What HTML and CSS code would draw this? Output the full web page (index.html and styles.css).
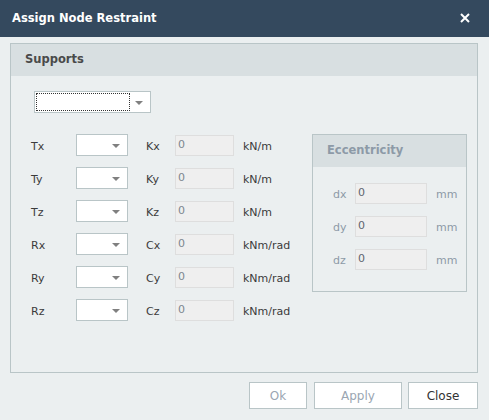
FILE: index.html
```html
<!DOCTYPE html>
<html>
<head>
  <meta charset="UTF-8">
  <title>Assign Node Restraint</title>
  <link rel="stylesheet" href="styles.css">
</head>
<body>
  <div class="dialog">
    <div class="title-bar">
      <span class="title">Assign Node Restraint</span>
      <span class="close-x">
        <svg width="10" height="10" viewBox="0 0 10 10">
          <path d="M1 1 L9 9 M9 1 L1 9" stroke="#ffffff" stroke-width="2" fill="none"/>
        </svg>
      </span>
    </div>

    <div class="content">
      <div class="panel supports">
        <div class="panel-header">Supports</div>
        <div class="panel-body">
          <div class="combo combo-main">
            <div class="focus-rect"></div>
            <span class="arrow"></span>
          </div>

          <div class="support-area">
            <div class="rows">
              <div class="row">
                <span class="lbl">Tx</span>
                <div class="combo combo-small"><span class="arrow"></span></div>
                <span class="lbl2">Kx</span>
                <div class="field">0</div>
                <span class="unit">kN/m</span>
              </div>
              <div class="row">
                <span class="lbl">Ty</span>
                <div class="combo combo-small"><span class="arrow"></span></div>
                <span class="lbl2">Ky</span>
                <div class="field">0</div>
                <span class="unit">kN/m</span>
              </div>
              <div class="row">
                <span class="lbl">Tz</span>
                <div class="combo combo-small"><span class="arrow"></span></div>
                <span class="lbl2">Kz</span>
                <div class="field">0</div>
                <span class="unit">kN/m</span>
              </div>
              <div class="row">
                <span class="lbl">Rx</span>
                <div class="combo combo-small"><span class="arrow"></span></div>
                <span class="lbl2">Cx</span>
                <div class="field">0</div>
                <span class="unit">kNm/rad</span>
              </div>
              <div class="row">
                <span class="lbl">Ry</span>
                <div class="combo combo-small"><span class="arrow"></span></div>
                <span class="lbl2">Cy</span>
                <div class="field">0</div>
                <span class="unit">kNm/rad</span>
              </div>
              <div class="row">
                <span class="lbl">Rz</span>
                <div class="combo combo-small"><span class="arrow"></span></div>
                <span class="lbl2">Cz</span>
                <div class="field">0</div>
                <span class="unit">kNm/rad</span>
              </div>
            </div>

            <div class="panel eccentricity">
              <div class="panel-header">Eccentricity</div>
              <div class="ecc-body">
                <div class="ecc-row">
                  <span class="ecc-lbl">dx</span>
                  <div class="field ecc-field">0</div>
                  <span class="ecc-unit">mm</span>
                </div>
                <div class="ecc-row">
                  <span class="ecc-lbl">dy</span>
                  <div class="field ecc-field">0</div>
                  <span class="ecc-unit">mm</span>
                </div>
                <div class="ecc-row">
                  <span class="ecc-lbl">dz</span>
                  <div class="field ecc-field">0</div>
                  <span class="ecc-unit">mm</span>
                </div>
              </div>
            </div>
          </div>
        </div>
      </div>

      <div class="buttons">
        <button class="btn btn-ok" disabled>Ok</button>
        <button class="btn btn-apply" disabled>Apply</button>
        <button class="btn btn-close">Close</button>
      </div>
    </div>
  </div>
</body>
</html>
```

FILE: styles.css
```css
body {
  margin: 0;
  font-family: 'DejaVu Sans', Verdana, sans-serif;
  font-size: 11px;
  color: #3b3b3b;
  background-color: #ebeff0;
}

.dialog {
  width: 489px;
  height: 420px;
  background-color: #ebeff0;
}

.title-bar {
  height: 37px;
  background-color: #34495e;
  display: flex;
  align-items: center;
  justify-content: space-between;
  padding: 0 20px 0 12px;
}

.title {
  color: #ffffff;
  font-weight: bold;
  font-size: 11.5px;
  margin-top: -1px;
}

.close-x {
  display: flex;
  margin-top: -1px;
  margin-right: -1px;
}

.content {
  padding: 6px 11px 0 10px;
}

/* panels */
.panel {
  border: 1px solid #b9c5c7;
  background-color: #ebeff0;
}

.panel-header {
  height: 32px;
  line-height: 31px;
  background-color: #d8dfe1;
  font-weight: bold;
  font-size: 11.5px;
  color: #4a4a4a;
  padding-left: 14px;
}

.supports {
  height: 328px;
}

.panel-body {
  padding: 15px 0 0 23px;
}

/* combos */
.combo {
  background-color: #ffffff;
  border: 1px solid #b9c5c7;
  position: relative;
  box-sizing: border-box;
}

.combo-main {
  width: 117px;
  height: 22px;
}

.combo-small {
  width: 52px;
  height: 22px;
}

.focus-rect {
  position: absolute;
  left: 1px;
  top: 1px;
  width: 92px;
  height: 16px;
  border: 1px dotted #333333;
}

.arrow {
  position: absolute;
  right: 7px;
  top: 9px;
  width: 0;
  height: 0;
  border-left: 4px solid transparent;
  border-right: 4px solid transparent;
  border-top: 4px solid #808080;
}

.support-area {
  display: flex;
  margin-top: 21px;
  margin-left: -3px;
}

.rows {
  display: flex;
  flex-direction: column;
  gap: 11px;
}

.row {
  display: flex;
  align-items: center;
  height: 22px;
}

.lbl {
  width: 45px;
  padding-top: 2px;
}

.lbl2 {
  width: 29px;
  margin-left: 18px;
  padding-top: 2px;
}

.field {
  box-sizing: border-box;
  width: 59px;
  height: 21px;
  background-color: #efefef;
  border: 1px solid #dedede;
  color: #7d8790;
  padding-left: 2px;
  line-height: 17px;
}

.unit {
  width: 60px;
  margin-left: 9px;
  padding-top: 2px;
}

/* eccentricity */
.eccentricity {
  width: 153px;
  height: 156px;
  margin-left: 9px;
}

.eccentricity .panel-header {
  color: #8d9aa7;
}

.ecc-body {
  display: flex;
  flex-direction: column;
  gap: 12px;
  padding-top: 16px;
  padding-left: 20px;
}

.ecc-row {
  display: flex;
  align-items: center;
  height: 21px;
  color: #8d9aa7;
}

.ecc-lbl {
  width: 22px;
  padding-top: 2px;
}

.ecc-field {
  width: 72px;
  color: #5f6670;
}

.ecc-unit {
  margin-left: 9px;
  padding-top: 2px;
}

/* buttons */
.buttons {
  display: flex;
  justify-content: flex-end;
  margin-top: 9px;
  gap: 7px;
}

.btn {
  height: 27px;
  background-color: #ffffff;
  border: 1px solid #b9c5c7;
  font-family: 'DejaVu Sans', Verdana, sans-serif;
  font-size: 12px;
  color: #333333;
  padding: 0;
}

.btn:disabled {
  color: #9aa6b2;
}

.btn-ok {
  width: 58px;
}

.btn-apply {
  width: 88px;
}

.btn-close {
  width: 70px;
  margin-left: -1px;
}
```
